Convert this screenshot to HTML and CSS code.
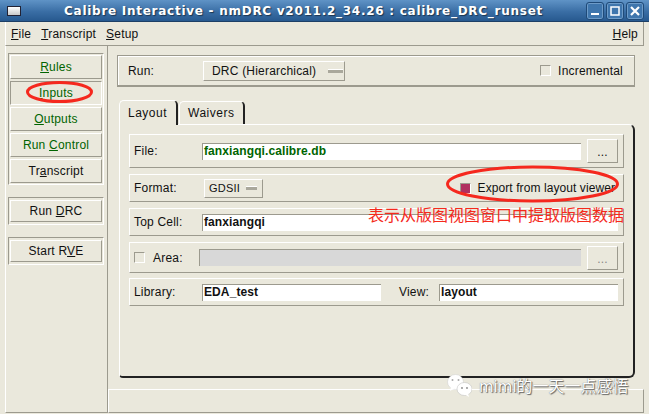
FILE: index.html
```html
<!DOCTYPE html>
<html lang="en">
<head>
  <meta charset="UTF-8">
  <title>Calibre Interactive - nmDRC</title>
  <link rel="stylesheet" href="styles.css">
</head>
<body>
  <div class="cal-window">
    <div class="cal-title">
      <span class="cal-winicon"></span>
      <span class="cal-title-text">Calibre Interactive - nmDRC v2011.2_34.26 : calibre_DRC_runset</span>
      <div class="cal-winbtns">
        <span class="cal-winbtn"><svg width="16" height="16" viewBox="0 0 16 16"><rect x="4" y="10" width="8" height="2" fill="#fff"/></svg></span>
        <span class="cal-winbtn"><svg width="16" height="16" viewBox="0 0 16 16"><rect x="4" y="4" width="8" height="8" fill="none" stroke="#fff" stroke-width="1.5"/></svg></span>
        <span class="cal-winbtn"><svg width="16" height="16" viewBox="0 0 16 16"><path d="M4 4 L12 12 M12 4 L4 12" stroke="#fff" stroke-width="2.2"/></svg></span>
      </div>
    </div>

    <div class="cal-menu">
      <span><u>F</u>ile</span>
      <span><u>T</u>ranscript</span>
      <span><u>S</u>etup</span>
      <span class="cal-menu-help"><u>H</u>elp</span>
    </div>

    <div class="cal-body">
      <div class="cal-side">
        <div class="cal-group">
          <div class="cal-btn green"><span><u>R</u>ules</span></div>
          <div class="cal-btn green sunken"><span><u>I</u>nputs</span></div>
          <div class="cal-btn green"><span><u>O</u>utputs</span></div>
          <div class="cal-btn green"><span>Run <u>C</u>ontrol</span></div>
          <div class="cal-btn"><span>Tr<u>a</u>nscript</span></div>
        </div>
        <div class="cal-group single">
          <div class="cal-btn"><span>Run <u>D</u>RC</span></div>
        </div>
        <div class="cal-group single">
          <div class="cal-btn"><span>Start R<u>V</u>E</span></div>
        </div>
      </div>

      <div class="cal-main">
        <div class="cal-content">
          <div class="cal-run">
            <span class="cal-run-label">Run:</span>
            <div class="cal-option wide"><span>DRC (Hierarchical)</span><i></i></div>
            <span class="cal-check"></span>
            <span class="cal-inc">Incremental</span>
          </div>

          <div class="cal-tabs">
            <div class="cal-tab active">Layout</div>
            <div class="cal-tab">Waivers</div>
          </div>

          <div class="cal-panel">
            <div class="cal-row file">
              <label>File:</label>
              <div class="cal-input green">fanxiangqi.calibre.db</div>
              <div class="cal-dots">...</div>
            </div>
            <div class="cal-row format">
              <label>Format:</label>
              <div class="cal-option small"><span>GDSII</span><i></i></div>
              <span class="cal-export-check"></span>
              <span class="cal-export">Export from layout viewer</span>
            </div>
            <div class="cal-row topcell">
              <label>Top Cell:</label>
              <div class="cal-input">fanxiangqi</div>
            </div>
            <div class="cal-row area">
              <span class="cal-check"></span>
              <label>Area:</label>
              <div class="cal-input disabled"></div>
              <div class="cal-dots off">...</div>
            </div>
            <div class="cal-row library">
              <label>Library:</label>
              <div class="cal-input lib">EDA_test</div>
              <label class="view">View:</label>
              <div class="cal-input">layout</div>
            </div>
          </div>
        </div>
        <div class="cal-status"></div>
      </div>
    </div>
  </div>

  <svg class="cal-marks" width="649" height="414" viewBox="0 0 649 414">
    <ellipse cx="59.500" cy="92" rx="32" ry="9.500" fill="none" stroke="#f5281e" stroke-width="3"/>
    <ellipse cx="532.500" cy="184" rx="85" ry="17" fill="none" stroke="#f5281e" stroke-width="3"/>
  </svg>
  <div class="cal-note">表示从版图视图窗口中提取版图数据</div>
  <div class="cal-mark">
    <svg width="26" height="24" viewBox="0 0 26 24">
      <ellipse cx="9.500" cy="9" rx="8" ry="7.500" fill="#fff" stroke="#ccc" stroke-width="0.500"/>
      <path d="M5 14 L4 18 L9 15 Z" fill="#fff"/>
      <ellipse cx="18.500" cy="16" rx="7.500" ry="6.500" fill="#fff" stroke="#bbb" stroke-width="0.500"/>
      <path d="M22 20 L23 24 L18 21 Z" fill="#fff"/>
      <circle cx="6.500" cy="7" r="1" fill="#aaa"/>
      <circle cx="12.500" cy="7" r="1" fill="#aaa"/>
      <circle cx="16" cy="15" r="0.900" fill="#888"/>
      <circle cx="21" cy="15" r="0.900" fill="#888"/>
    </svg>
    <span><span class="cal-mark-name">mimi</span>的一天一点感悟</span>
  </div>
</body>
</html>
```

FILE: styles.css
```css
:root {
  --bg: #eae8dc;
  --hi: #ffffff;
  --lo: #9c9a8e;
  --green: #006400;
}
html, body {
  margin: 0;
  padding: 0;
}
body {
  width: 649px;
  height: 414px;
  overflow: hidden;
  position: relative;
  font-family: "Liberation Sans", "Noto Sans CJK SC", sans-serif;
  font-size: 12px;
  letter-spacing: 0.2px;
  color: #111;
  background: var(--bg);
}
.cal-window {
  width: 649px;
  height: 414px;
  display: flex;
  flex-direction: column;
  box-sizing: border-box;
  padding: 0 5px 1px 0;
}
.cal-title {
  margin-right: -5px;
  height: 22px;
  flex: none;
  display: flex;
  align-items: center;
  background: linear-gradient(180deg, #5f93c6 0%, #3a6ea5 55%, #27598f 100%);
  border-bottom: 1px solid #1d3f66;
  box-sizing: border-box;
  color: #fff;
}
.cal-winicon {
  width: 12px;
  height: 8px;
  margin-left: 7px;
  background: linear-gradient(180deg, #fff, #c9c9c9);
  border: 1px solid #223;
  flex: none;
}
.cal-title-text {
  flex: 1;
  text-align: center;
  font-family: "DejaVu Sans", sans-serif;
  font-weight: bold;
  font-size: 12px;
  letter-spacing: 0.73px;
  white-space: nowrap;
  text-shadow: 1px 1px 1px #1c3550;
}
.cal-winbtns {
  display: flex;
  gap: 2px;
  margin-right: 5px;
}
.cal-winbtn {
  width: 18px;
  height: 18px;
  border: 1px solid #1f4a78;
  border-radius: 3px;
  box-sizing: border-box;
  background: #3f76ad;
  box-shadow: inset 0 0 0 1px #6d9bc8;
  display: flex;
  align-items: center;
  justify-content: center;
}
.cal-menu {
  height: 24px;
  flex: none;
  margin-left: 5px;
  display: flex;
  align-items: center;
  gap: 10px;
  padding: 0 5px;
  border-left: 1px solid var(--hi);
  border-bottom: 1px solid var(--lo);
  border-right: 1px solid var(--lo);
  box-sizing: border-box;
}
.cal-menu-help {
  margin-left: auto;
}
.cal-body {
  flex: 1;
  display: flex;
  margin-left: 5px;
  min-height: 0;
}
.cal-side {
  width: 103px;
  flex: none;
  box-sizing: border-box;
  padding: 7px 0 0 2px;
  border-right: 1px solid var(--lo);
  border-left: 1px solid var(--hi);
  border-bottom: 1px solid var(--lo);
  display: flex;
  flex-direction: column;
  gap: 12px;
}
.cal-group {
  width: 96px;
  box-sizing: border-box;
  display: flex;
  flex-direction: column;
  gap: 2px;
  border-top: 1px solid var(--lo);
  border-left: 1px solid var(--lo);
  border-right: 1px solid var(--hi);
  border-bottom: 1px solid var(--hi);
  padding: 1px;
}
.cal-group.single {
  padding: 2px 1px;
  height: 28px;
}
.cal-btn {
  height: 24px;
  flex: none;
  display: flex;
  align-items: center;
  justify-content: center;
  border-top: 1px solid var(--hi);
  border-left: 1px solid var(--hi);
  border-right: 1px solid var(--lo);
  border-bottom: 1px solid var(--lo);
  box-sizing: border-box;
}
.single .cal-btn {
  height: 22px;
}
.cal-btn.green {
  color: var(--green);
}
.cal-btn.sunken {
  border-color: var(--lo) var(--hi) var(--hi) var(--lo);
}
.cal-main {
  flex: 1;
  display: flex;
  flex-direction: column;
  min-width: 0;
}
.cal-content {
  flex: 1;
  padding: 9px 9px 0 9px;
  min-height: 0;
}
.cal-run {
  height: 32px;
  box-sizing: border-box;
  display: flex;
  align-items: center;
  border-top: 1px solid var(--lo);
  border-left: 1px solid var(--lo);
  border-right: 1px solid var(--lo);
  border-bottom: 2px solid var(--lo);
  box-shadow: inset 1px 1px 0 var(--hi);
  padding-left: 10px;
}
.cal-run-label {
  width: 75px;
}
.cal-option {
  height: 19px;
  box-sizing: border-box;
  display: flex;
  align-items: center;
  justify-content: space-between;
  padding: 0 1px 0 4px;
  border-top: 1px solid var(--hi);
  border-left: 1px solid var(--hi);
  border-right: 1px solid var(--lo);
  border-bottom: 1px solid var(--lo);
  flex: none;
}
.cal-option.wide {
  width: 142px;
  height: 20px;
  padding-left: 8px;
}
.cal-option.small {
  width: 59px;
  margin-left: 2px;
  padding-right: 5px;
  font-size: 11px;
}
.cal-option i {
  display: block;
  width: 11px;
  height: 3px;
  background: #aaa89c;
  border-top: 1px solid var(--hi);
}
.cal-option.wide i {
  width: 15px;
}
.cal-run .cal-check {
  margin-left: auto;
}
.cal-check {
  width: 11px;
  height: 11px;
  flex: none;
  box-sizing: border-box;
  border-top: 1px solid var(--lo);
  border-left: 1px solid var(--lo);
  border-right: 1px solid var(--hi);
  border-bottom: 1px solid var(--hi);
}
.cal-inc {
  margin: 0 11px 0 7px;
}
.cal-tabs {
  display: flex;
  margin: 13px 0 0 2px;
  height: 24px;
  gap: 1px;
  letter-spacing: 0.5px;
}
.cal-tab {
  padding: 0 9px 0 8px;
  display: flex;
  align-items: center;
  border-top: 1px solid var(--hi);
  border-left: 1px solid var(--hi);
  border-right: 2px solid #222;
  border-radius: 5px 5px 0 0;
  margin-top: 1px;
}
.cal-tab.active {
  position: relative;
  z-index: 1;
  margin-top: 0;
  margin-bottom: -1px;
  background: var(--bg);
}
.cal-panel {
  height: 254px;
  margin-left: 2px;
  box-sizing: border-box;
  border-top: 1px solid var(--hi);
  border-left: 1px solid var(--hi);
  border-right: 2px solid #222;
  border-bottom: 2px solid #222;
  border-radius: 0 6px 6px 4px;
  padding: 9px 9px 0 9px;
  display: flex;
  flex-direction: column;
}
.cal-row {
  display: flex;
  align-items: center;
  box-sizing: border-box;
  border-top: 1px solid var(--hi);
  border-left: 1px solid var(--hi);
  border-right: 1px solid var(--lo);
  border-bottom: 1px solid var(--lo);
  padding: 0 5px 0 4px;
  flex: none;
}
.cal-row label {
  flex: none;
  width: 68px;
}
.cal-row.file {
  height: 34px;
  margin-bottom: 6px;
}
.cal-row.format {
  height: 28px;
  margin-bottom: 6px;
}
.cal-row.topcell {
  height: 28px;
  margin-bottom: 6px;
}
.cal-row.area {
  height: 31px;
  margin-bottom: 5px;
}
.cal-row.library {
  height: 28px;
}
.cal-input {
  flex: 1;
  height: 17px;
  min-width: 0;
  box-sizing: border-box;
  background: #fff;
  border-left: 1px solid var(--lo);
  border-top: 1px solid var(--lo);
  font-weight: bold;
  padding-left: 1px;
  line-height: 14px;
  letter-spacing: 0.1px;
  white-space: nowrap;
}
.cal-input.green {
  color: var(--green);
}
.cal-input.disabled {
  background: #d8d8d8;
}
.cal-input.lib {
  flex: none;
  width: 179px;
}
.cal-row label.view {
  width: 28px;
  margin: 0 12px 0 18px;
}
.cal-dots {
  flex: none;
  width: 31px;
  height: 24px;
  margin-left: 6px;
  box-sizing: border-box;
  border-top: 1px solid var(--hi);
  border-left: 1px solid var(--hi);
  border-right: 1px solid var(--lo);
  border-bottom: 1px solid var(--lo);
  text-align: center;
  line-height: 24px;
}
.cal-dots.off {
  color: #888;
}
.cal-row.area .cal-check {
  margin: 0 8px 0 0;
}
.cal-row.area label {
  width: 46px;
}
.cal-export-check {
  width: 11px;
  height: 11px;
  margin-left: auto;
  margin-right: 7px;
  background: #b03060;
  box-sizing: border-box;
  border-top: 1px solid var(--lo);
  border-left: 1px solid var(--lo);
  border-right: 1px solid var(--hi);
  border-bottom: 1px solid var(--hi);
  flex: none;
}
.cal-export {
  margin-right: 3px;
  letter-spacing: 0.08px;
}
.cal-status {
  height: 24px;
  flex: none;
  box-sizing: border-box;
  border-top: 1px solid var(--hi);
  border-left: 1px solid var(--hi);
  border-right: 1px solid var(--lo);
  border-bottom: 1px solid var(--lo);
}

/* red annotations and the watermark sit on top of the screenshot */
.cal-marks {
  position: absolute;
  left: 0;
  top: 0;
  pointer-events: none;
}
.cal-note {
  position: absolute;
  left: 368px;
  top: 205px;
  font-family: "Noto Sans CJK SC", sans-serif;
  font-size: 16px;
  letter-spacing: 0;
  line-height: 18px;
  color: #f42a1c;
  white-space: nowrap;
}
.cal-mark {
  position: absolute;
  left: 446px;
  top: 373px;
  display: flex;
  align-items: center;
  gap: 7px;
  color: #fff;
  font-family: "Noto Sans CJK SC", sans-serif;
  font-size: 16px;
  letter-spacing: 0;
  text-shadow: 0 0 1px #555, 1px 1px 1px #666;
  white-space: nowrap;
}
.cal-mark-name {
  font-family: "DejaVu Sans", sans-serif;
  font-size: 15px;
}
```
